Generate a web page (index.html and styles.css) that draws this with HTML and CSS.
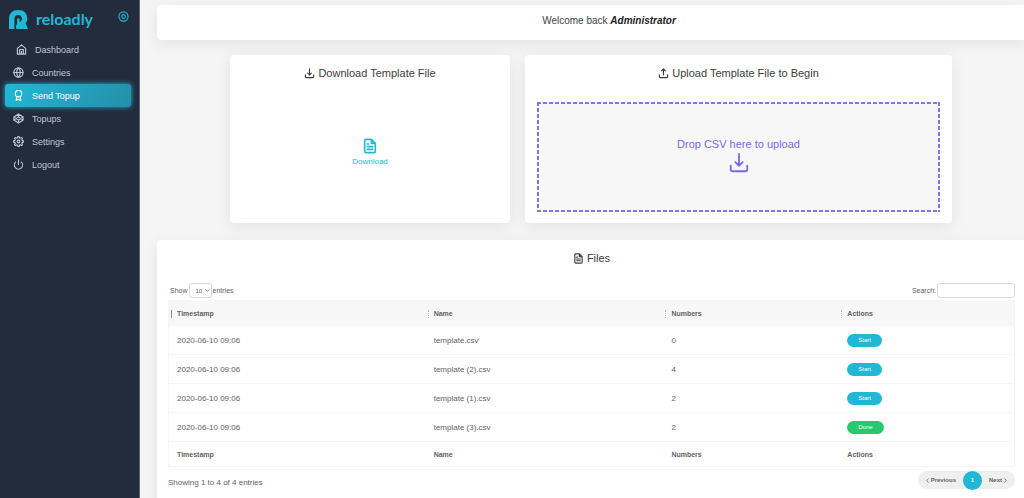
FILE: index.html
```html
<!DOCTYPE html>
<html lang="en">
<head>
<meta charset="utf-8">
<title>Reloadly - Send Topup</title>
<link rel="stylesheet" href="styles.css">
</head>
<body>
<svg class="sprite" aria-hidden="true">
  <symbol id="download" viewBox="0 0 24 24"><path d="M21 15v4a2 2 0 0 1-2 2H5a2 2 0 0 1-2-2v-4M8 11l4 4 4-4M12 15V2"/></symbol>
  <symbol id="upload" viewBox="0 0 24 24"><path d="M21 15v4a2 2 0 0 1-2 2H5a2 2 0 0 1-2-2v-4M16 6l-4-4-4 4M12 2v13"/></symbol>
  <symbol id="file" viewBox="0 0 24 24"><path d="M14 2H6a2 2 0 0 0-2 2v16a2 2 0 0 0 2 2h12a2 2 0 0 0 2-2V8zM14 2v6h6M16 13H8M16 17H8M10 9H8"/></symbol>
</svg>
<div class="app">
  <aside class="sidebar">
    <header class="brand">
      <a class="logo" href="#">
        <svg class="logo-mark" viewBox="0 0 56 56" aria-hidden="true"><path d="M0 56V27C0 10 10 0 27 0s27 10 27 25c0 6-2 10-5 14l7 17zM16 56h5V44l3-3V28c0-5 7-5 7 0v7c4-1 7-4 7-9 0-6-4-11-11-11s-11 4-11 12z" fill-rule="evenodd"/></svg>
        <span>reloadly</span>
      </a>
      <button class="pin" type="button" aria-label="Toggle menu">
        <svg class="icon" viewBox="0 0 24 24"><circle cx="12" cy="12" r="10"/><circle cx="12" cy="12" r="4"/></svg>
      </button>
    </header>
    <nav class="menu">
      <a class="menu-item home" href="#"><svg class="icon" viewBox="0 0 24 24"><path d="M3 9.500 12 2l9 7.500V22H3zM8 22V12h8v10M12 16v6"/></svg>Dashboard</a>
      <a class="menu-item" href="#"><svg class="icon" viewBox="0 0 24 24"><circle cx="12" cy="12" r="10"/><path d="M2 12h20M12 2a15.300 15.300 0 0 1 4 10 15.300 15.300 0 0 1-4 10 15.300 15.300 0 0 1-4-10 15.300 15.300 0 0 1 4-10z"/></svg>Countries</a>
      <a class="menu-item active" href="#" aria-current="page"><svg class="icon" viewBox="0 0 24 24"><circle cx="12" cy="8" r="7"/><path d="M8.200 13.900 7 23l5-3 5 3-1.200-9.100"/></svg>Send Topup</a>
      <a class="menu-item" href="#"><svg class="icon" viewBox="0 0 24 24"><path d="M12 2l10 6.500v7L12 22 2 15.500v-7zM12 22v-6.500M22 8.500l-10 7-10-7M2 15.500l10-7 10 7M12 2v6.500"/></svg>Topups</a>
      <a class="menu-item" href="#"><svg class="icon" viewBox="0 0 24 24"><circle cx="12" cy="12" r="3"/><path d="M19.400 15a1.650 1.650 0 0 0 .33 1.820l.06.06a2 2 0 0 1-2.830 2.830l-.06-.06a1.650 1.650 0 0 0-2.800 1.170V21a2 2 0 0 1-4 0v-.09a1.650 1.650 0 0 0-2.900-1.180l-.06.06a2 2 0 0 1-2.830-2.830l.06-.06A1.650 1.650 0 0 0 3.090 14H3a2 2 0 0 1 0-4h.09a1.650 1.650 0 0 0 1.180-2.900l-.06-.06a2 2 0 0 1 2.830-2.830l.06.06A1.650 1.650 0 0 0 10 3.090V3a2 2 0 0 1 4 0v.09a1.650 1.650 0 0 0 2.900 1.180l.06-.06a2 2 0 0 1 2.830 2.830l-.06.06A1.650 1.650 0 0 0 20.910 10H21a2 2 0 0 1 0 4h-.09a1.650 1.650 0 0 0-1.510 1z"/></svg>Settings</a>
      <a class="menu-item" href="#"><svg class="icon" viewBox="0 0 24 24"><path d="M18.360 6.640a9 9 0 1 1-12.730 0M12 2v10"/></svg>Logout</a>
    </nav>
  </aside>
  <main class="content">
    <section class="card welcome"><p>Welcome back <strong>Administrator</strong></p></section>
    <div class="transfer">
      <section class="card download">
        <h2><svg class="icon"><use href="#download"/></svg>Download Template File</h2>
        <a class="download-link" href="#"><svg class="icon"><use href="#file"/></svg>Download</a>
      </section>
      <section class="card upload">
        <h2><svg class="icon"><use href="#upload"/></svg>Upload Template File to Begin</h2>
        <button class="dropzone" type="button">Drop CSV here to upload<svg class="icon"><use href="#download"/></svg></button>
      </section>
    </div>
    <section class="card files">
      <h2><svg class="icon"><use href="#file"/></svg>Files</h2>
      <div class="toolbar">
        <div class="field"><label for="length">Show</label>
          <span class="select"><select id="length"><option>10</option><option>25</option></select><svg class="icon" viewBox="0 0 24 24"><path d="M4 8l8 8 8-8"/></svg></span>
          <span>entries</span></div>
        <div class="field"><label for="search">Search:</label><input id="search" type="search"></div>
      </div>
      <table>
        <colgroup><col class="c-time"><col class="c-name"><col class="c-num"><col></colgroup>
        <thead><tr><th class="sorted">Timestamp</th><th>Name</th><th>Numbers</th><th>Actions</th></tr></thead>
        <tbody>
          <tr><td>2020-06-10 09:06</td><td>template.csv</td><td>0</td><td><button class="pill" type="button">Start</button></td></tr>
          <tr><td>2020-06-10 09:06</td><td>template (2).csv</td><td>4</td><td><button class="pill" type="button">Start</button></td></tr>
          <tr><td>2020-06-10 09:06</td><td>template (1).csv</td><td>2</td><td><button class="pill" type="button">Start</button></td></tr>
          <tr><td>2020-06-10 09:06</td><td>template (3).csv</td><td>2</td><td><button class="pill done" type="button">Done</button></td></tr>
        </tbody>
        <tfoot><tr><th>Timestamp</th><th>Name</th><th>Numbers</th><th>Actions</th></tr></tfoot>
      </table>
      <div class="summary">
        <p>Showing 1 to 4 of 4 entries</p>
        <nav class="pages" aria-label="Pages">
          <a href="#"><svg class="icon" viewBox="0 0 24 24"><path d="M16 4l-8 8 8 8"/></svg>Previous</a>
          <a class="current" href="#" aria-current="page">1</a>
          <a href="#">Next<svg class="icon" viewBox="0 0 24 24"><path d="M8 4l8 8-8 8"/></svg></a>
        </nav>
      </div>
    </section>
  </main>
</div>
</body>
</html>
```
FILE: styles.css
```css
* { box-sizing: border-box; }
body { margin: 0; font-family: "Liberation Sans", Arial, sans-serif; font-size: 8px; color: #626262; background: #f5f5f5; }
h2, p { margin: 0; font-weight: 400; }
a { color: inherit; text-decoration: none; }
button, input, select { font: inherit; color: inherit; }
.sprite { display: none; }
.icon { width: 11px; height: 11px; flex: none; fill: none; stroke: currentColor; stroke-width: 2; stroke-linecap: round; stroke-linejoin: round; }

.app { display: flex; height: 100vh; overflow: hidden; }
.sidebar { flex: 0 0 140px; padding: 0 8px 0 5px; background: #232c3d; border-right: 1px solid #596070; color: #c0c5d5; }
.brand { display: flex; align-items: center; justify-content: space-between; height: 38px; padding-left: 4px; color: #20b8d5; }
.logo { display: flex; align-items: center; gap: 8px; font: 700 16px/20px Lato, sans-serif; }
.logo-mark { width: 19px; height: 19px; fill: currentColor; }
.pin { display: flex; padding: 0 2px 6px; border: 0; background: none; }
.menu { display: flex; flex-direction: column; }
.menu-item { display: flex; align-items: center; gap: 8px; height: 23px; padding-left: 8px; border-radius: 3px; font-size: 9px; }
.menu-item .icon, .pin .icon, .card h2 .icon, .download-link .icon { stroke-width: 2.5; }
.home { padding-left: 11px; }
.active { color: #fff; background: linear-gradient(118deg, #20b8d5, #258fa9); box-shadow: 0 0 5px #20b8d5; }

.content { flex: 1; min-width: 0; margin-right: -3px; padding: 5px 0 0 17px; }
.card { background: #fff; border-radius: 4px; box-shadow: 0 4px 16px rgba(0, 0, 0, .08); }
.welcome { padding: 8px 0 12px 34px; font-size: 10px; line-height: 15px; text-align: center; color: #444; }
.welcome strong { font-style: italic; color: #222; }
.transfer { display: grid; grid-template-columns: 280fr 427fr; gap: 15px; padding: 15px 75px 17px 73px; }
.card h2 { display: flex; align-items: center; justify-content: center; gap: 3px; font-size: 11px; line-height: 14px; color: #3c3c3c; }
.download, .upload { display: flex; flex-direction: column; padding: 11px 12px; }
.download-link { display: flex; flex: 1; flex-direction: column; align-items: center; justify-content: center; gap: 3px; padding-top: 12px; color: #20b8d5; }
.download-link .icon { width: 16px; height: 16px; }
.dropzone {
  --dash: #8075f1 0 4px, transparent 4px 6px;
  display: flex; flex-direction: column; align-items: center; justify-content: center; gap: 2px;
  height: 110px; margin-top: 22px; padding: 0 0 2px; border: 0; color: #7869ec; font-size: 11px;
  background:
    repeating-linear-gradient(90deg, var(--dash)) top / 100% 2px no-repeat,
    repeating-linear-gradient(90deg, var(--dash)) bottom / 100% 2px no-repeat,
    repeating-linear-gradient(var(--dash)) left / 2px 100% no-repeat,
    repeating-linear-gradient(var(--dash)) right / 2px 100% no-repeat,
    #f7f7f7;
}
.dropzone .icon { width: 22px; height: 22px; }

.files { padding: 11px 12px 30px 11px; }
.toolbar { display: flex; justify-content: space-between; margin: 18px 0 2px; padding-left: 2px; font-size: 7px; }
.field { display: flex; align-items: center; gap: 1px; }
.select { display: grid; align-items: center; }
.select select { grid-area: 1 / 1; appearance: none; width: 23px; height: 15px; padding: 0 0 0 6px; border: 1px solid #d9d9d9; border-radius: 3px; background: #fff; font-size: 6px; }
.select .icon { grid-area: 1 / 1; justify-self: end; width: 5px; height: 5px; margin-right: 2px; stroke-width: 4; pointer-events: none; }
.field input { width: 78px; height: 15px; border: 1px solid #d9d9d9; border-radius: 3px; background: #fff; }
table { width: 100%; table-layout: fixed; border-collapse: collapse; border: 1px solid #f5f5f5; }
.c-time { width: 30.4%; }
.c-name { width: 28.1%; }
.c-num { width: 20.8%; }
th, td { padding: 0 8px; text-align: left; border-bottom: 1px solid #f5f5f5; }
th { height: 25px; font-size: 7px; font-weight: 700; }
td { height: 29px; }
thead th { position: relative; background: #f7f7f7; }
thead th::before { content: ""; position: absolute; left: 2px; top: 9px; height: 8px; border-left: 1px dotted #bbb; }
thead .sorted::before { border-left: 1px solid #888; }
.pill { display: block; height: 13px; padding: 0 11px; border: 0; border-radius: 7px; background: #20b8d5; color: #fff; font-size: 6px; line-height: 13px; }
.done { background: #29c770; }
.summary { display: flex; align-items: flex-start; justify-content: space-between; padding-top: 4px; }
.summary p { padding-top: 7px; }
.pages { display: flex; align-items: center; height: 18px; border-radius: 9px; background: #efefef; font-size: 6px; font-weight: 700; }
.pages a { display: flex; align-items: center; gap: 1px; padding: 0 7px; }
.pages .icon { width: 5px; height: 5px; stroke-width: 4; }
.pages .current { justify-content: center; width: 19px; height: 19px; padding: 0; border-radius: 50%; background: #20b8d5; color: #fff; }
```
